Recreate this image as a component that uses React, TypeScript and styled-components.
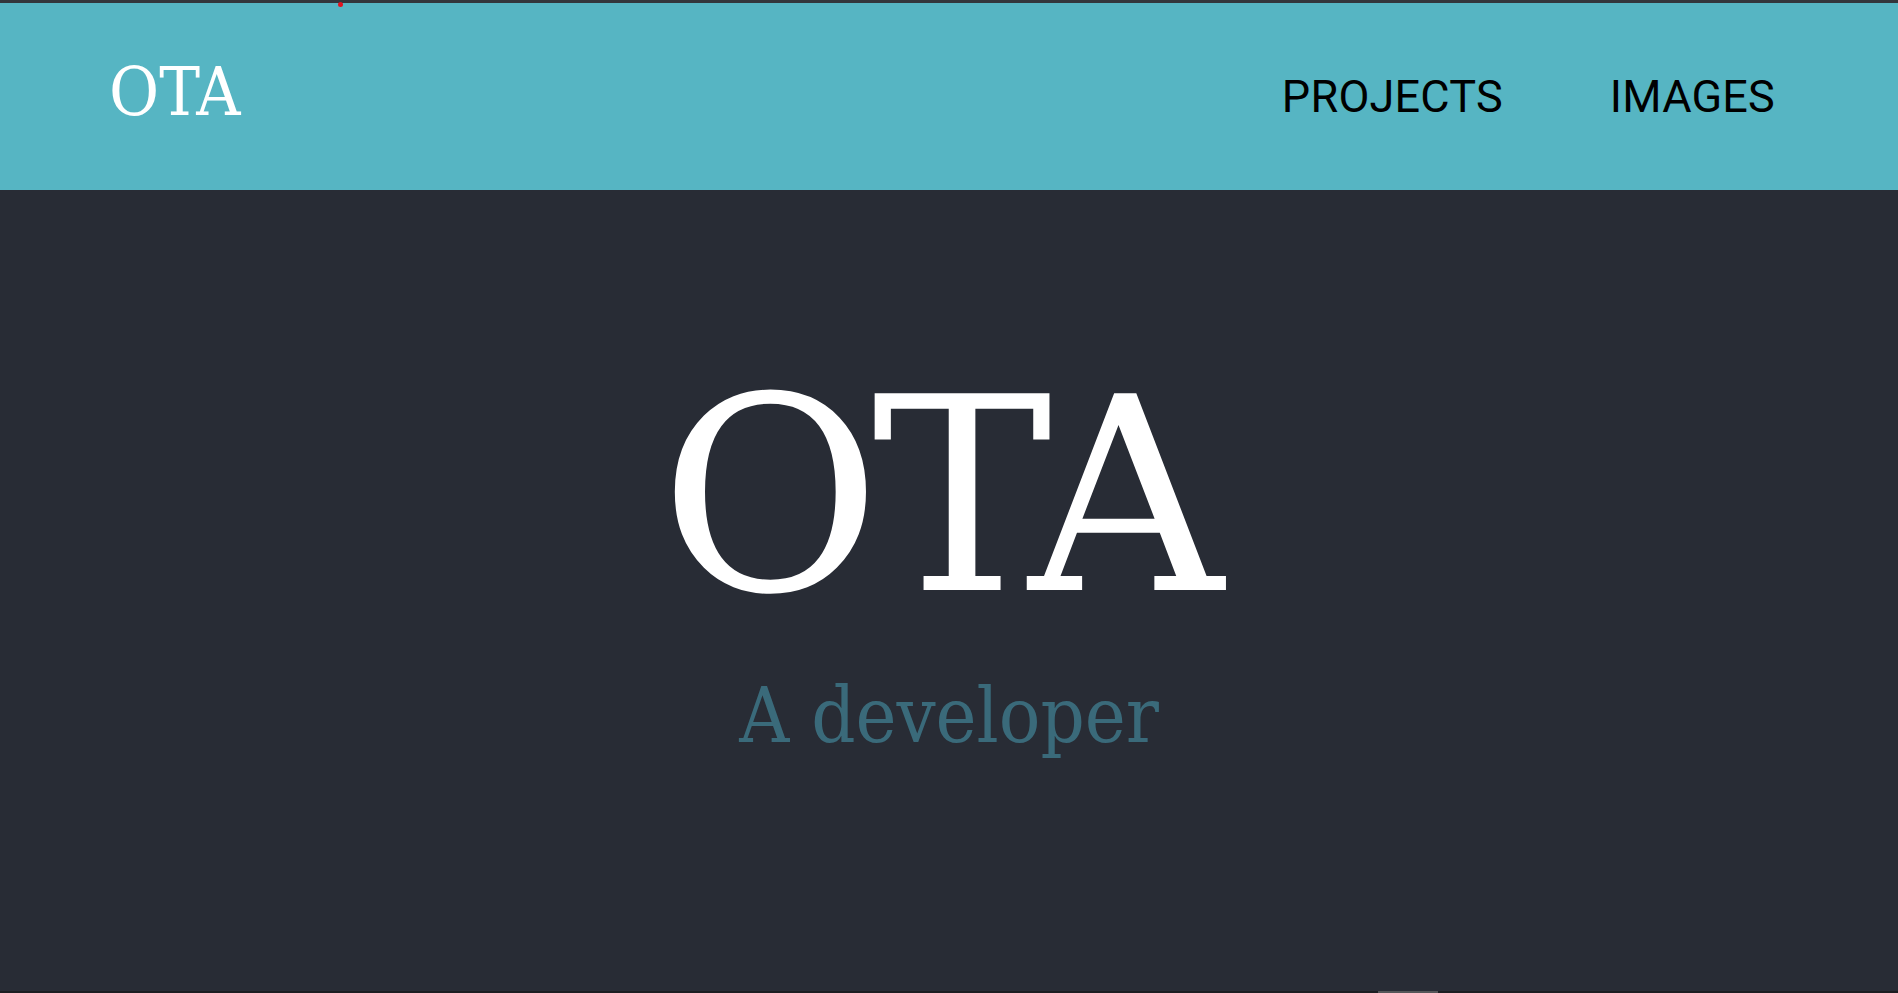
import React from "react";
import styled, { createGlobalStyle } from "styled-components";

const GlobalStyle = createGlobalStyle`
  html, body { margin: 0; padding: 0; background: #282c35; }
  body { overflow: hidden; }
  * { box-sizing: border-box; }
`;

const Page = styled.div`
  display: flex;
  flex-direction: column;
  height: 993px;
  background: #282c35;
`;

const TopLine = styled.div`
  position: relative;
  height: 3px;
  background: #33363c;
`;

const Dot = styled.span`
  position: absolute;
  left: 338px;
  top: 2px;
  width: 5px;
  height: 5px;
  border-radius: 50%;
  background: #e0131f;
  z-index: 2;
`;

const Header = styled.header`
  display: flex;
  align-items: center;
  justify-content: space-between;
  height: 187px;
  padding: 0 123px 0 109px;
  background: #56b5c3;
`;

const Logo = styled.a`
  font-family: "DejaVu Serif Condensed", "DejaVu Serif", serif;
  font-size: 68px;
  line-height: 1;
  color: #ffffff;
  text-decoration: none;
  margin-bottom: 10px;
`;

const Nav = styled.nav`
  display: flex;
  align-items: center;
  gap: 107px;
`;

const NavLink = styled.a`
  font-family: Roboto, "Liberation Sans", sans-serif;
  font-size: 45px;
  line-height: 1;
  color: #000000;
  text-decoration: none;
  letter-spacing: 0.2px;
`;

const Hero = styled.main`
  flex: 1;
  display: flex;
  flex-direction: column;
  align-items: center;
  padding-top: 172px;
`;

const Title = styled.h1`
  margin: 0;
  padding-right: 24px;
  font-family: "DejaVu Serif", serif;
  font-weight: 400;
  font-size: 270px;
  line-height: 1;
  letter-spacing: -9px;
  color: #ffffff;
`;

const Subtitle = styled.h2`
  margin: 45px 0 0;
  font-family: "DejaVu Serif Condensed", "DejaVu Serif", serif;
  font-weight: 400;
  font-size: 77px;
  line-height: 1;
  color: #3a6a7a;
`;

const BottomBar = styled.div`
  position: relative;
  height: 2px;
  background: #1c1e22;
`;

const ScrollThumb = styled.span`
  position: absolute;
  left: 1378px;
  top: 0;
  width: 60px;
  height: 2px;
  background: #555659;
`;

export default function App() {
  return (
    <>
      <GlobalStyle />
      <Page>
        <TopLine>
          <Dot />
        </TopLine>
        <Header>
          <Logo href="#">OTA</Logo>
          <Nav>
            <NavLink href="#">PROJECTS</NavLink>
            <NavLink href="#">IMAGES</NavLink>
          </Nav>
        </Header>
        <Hero>
          <Title>OTA</Title>
          <Subtitle>A developer</Subtitle>
        </Hero>
        <BottomBar>
          <ScrollThumb />
        </BottomBar>
      </Page>
    </>
  );
}
